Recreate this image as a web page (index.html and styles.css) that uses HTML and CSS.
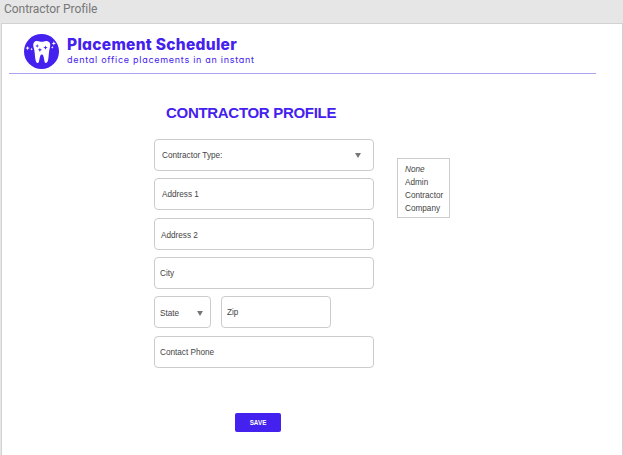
FILE: index.html
```html
<!DOCTYPE html>
<html lang="en">
<head>
<meta charset="utf-8">
<title>Contractor Profile</title>
<link rel="stylesheet" href="styles.css">
</head>
<body>
<div class="frame-title">Contractor Profile</div>
<div class="artboard">
  <header class="header">
    <svg class="logo" viewBox="0 0 35 35">
      <circle cx="17.5" cy="17.5" r="17.5" fill="#4421ee"/>
      <path d="M12.2 7.1C14.4 6.6 15.6 7.8 17.7 7.8S21.2 6.5 23.6 7.2C26.6 8.1 26.6 11.4 25.8 14.1C25 16.8 25 19.2 24.6 22.5C24.3 25.5 23.8 29 21.8 29C19.6 29 20.6 20.5 17.8 20.5S15.9 29 13.8 29C11.9 29 11.3 25.3 11 22.4C10.7 19.1 10.6 16.5 9.7 13.8C8.8 11 9.2 7.8 12.2 7.1Z" fill="#fff"/>
      <g fill="#fff">
        <path d="M3.6 11.9l.6 1.6 1.6.6-1.6.6-.6 1.6-.6-1.6-1.6-.6 1.6-.6z"/>
        <path d="M7.6 13.8l.4 1 1 .4-1 .4-.4 1-.4-1-1-.4 1-.4z"/>
        <path d="M29.8 7.2l.6 1.6 1.6.6-1.6.6-.6 1.6-.6-1.6-1.6-.6 1.6-.6z"/>
        <path d="M28.3 12l.4 1 1 .4-1 .4-.4 1-.4-1-1-.4 1-.4z"/>
      </g>
      <g fill="#4421ee">
        <path d="M13.2 10l.5 1.4 1.4.5-1.4.5-.5 1.4-.5-1.4-1.4-.5 1.4-.5z"/>
        <path d="M21.5 11.4l.6 1.6 1.6.6-1.6.6-.6 1.6-.6-1.6-1.6-.6 1.6-.6z"/>
        <path d="M15.9 13.7l.6 1.5 1.5.6-1.5.6-.6 1.5-.6-1.5-1.5-.6 1.5-.6z"/>
      </g>
    </svg>
    <div class="brand">
      <div class="brand-name">Placement Scheduler</div>
      <div class="tagline">dental office placements in an instant</div>
    </div>
  </header>
  <main class="content">
    <section class="form">
      <h1 class="title">CONTRACTOR PROFILE</h1>
      <div class="fields">
        <div class="field field-type"><span>Contractor Type:</span><svg class="arrow" viewBox="0 0 6 5"><path d="M0 0H6L3 5Z"/></svg></div>
        <div class="field field-address1"><span>Address 1</span></div>
        <div class="field field-address2"><span>Address 2</span></div>
        <div class="field"><span>City</span></div>
        <div class="row">
          <div class="field field-state"><span>State</span><svg class="arrow" viewBox="0 0 6 5"><path d="M0 0H6L3 5Z"/></svg></div>
          <div class="field field-zip"><span>Zip</span></div>
        </div>
        <div class="field field-phone"><span>Contact Phone</span></div>
      </div>
      <button class="save">SAVE</button>
    </section>
    <ul class="options">
      <li class="none">None</li>
      <li>Admin</li>
      <li>Contractor</li>
      <li>Company</li>
    </ul>
  </main>
</div>
</body>
</html>
```
FILE: styles.css
```css
* { box-sizing: border-box; }
body {
  margin: 0;
  height: 455px;
  overflow: hidden;
  display: flex;
  flex-direction: column;
  background: #e6e6e6;
  color: #444;
  font-family: "Liberation Sans", Arial, sans-serif;
}
.frame-title {
  height: 23px;
  padding-left: 4px;
  font: 12px/19px Roboto, sans-serif;
  letter-spacing: -0.05px;
  color: #777;
}
.artboard {
  flex: 1;
  margin-left: 1px;
  border: 1px solid #d2d2d2;
  border-bottom: 0;
  background: #fff;
}
.header {
  display: flex;
  width: 587px;
  height: 50px;
  margin-left: 7px;
  padding: 10px 0 0 15px;
  border-bottom: 1px solid #aaa3f0;
  color: #4421ee;
  font-family: Inter, sans-serif;
  font-feature-settings: "cv11";
  white-space: nowrap;
}
.logo { width: 35px; height: 35px; }
.brand { margin-left: 8px; }
.brand-name {
  font-size: 15.5px;
  font-weight: 800;
  line-height: 21px;
  letter-spacing: 0.3px;
}
.tagline {
  font-size: 9px;
  font-weight: 400;
  line-height: 10px;
  letter-spacing: 0.72px;
}
.content { display: flex; padding-left: 152px; }
.form { width: 220px; }
.title {
  margin: 29px 0 0 12px;
  font-size: 15px;
  line-height: 20px;
  letter-spacing: -0.3px;
  color: #4421ee;
  white-space: nowrap;
}
.fields {
  display: flex;
  flex-direction: column;
  gap: 7.3px;
  margin-top: 16px;
}
.field {
  display: flex;
  align-items: center;
  height: 32px;
  padding: 1px 12px 0 5px;
  border: 1px solid #ccc;
  border-radius: 4px;
  font-size: 8.2px;
}
.field-type, .field-address1 { padding-left: 7px; }
.field-address2 { padding: 4px 0 0 6px; }
.field-phone { margin-top: 0.5px; }
.arrow { width: 6px; height: 5px; margin-left: auto; fill: #777; }
.row { display: flex; gap: 10px; }
.field-state { width: 57px; padding: 2px 7px 0 5px; }
.field-zip { width: 110px; }
.save {
  display: block;
  width: 46px;
  height: 19px;
  margin: 45.3px 0 0 81px;
  padding: 1px 0 0;
  border: 0;
  border-radius: 2px;
  background: #4421ee;
  color: #fff;
  font: bold 6.3px/18px "Liberation Sans", Arial, sans-serif;
}
.options {
  width: 53px;
  height: 60px;
  margin: 84px 0 0 23px;
  padding: 5px 0 0 7px;
  border: 1px solid #ccc;
  list-style: none;
  font-size: 8.2px;
  line-height: 12.9px;
}
.none { font-style: italic; }
```
